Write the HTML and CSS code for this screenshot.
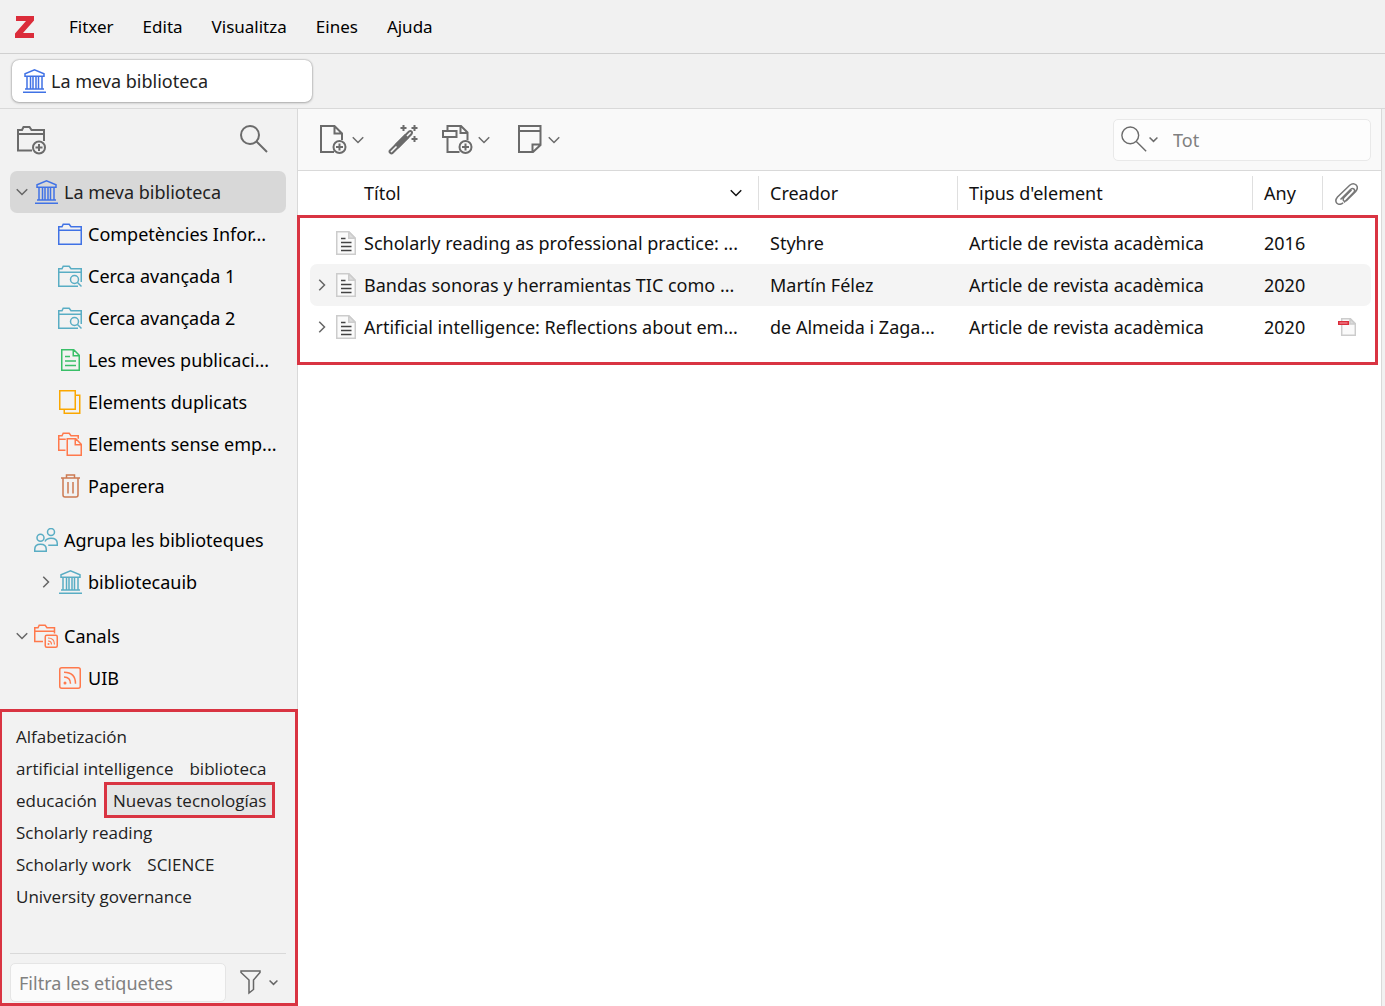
FILE: index.html
```
<!DOCTYPE html>
<html lang="ca">
<head>
    <meta charset="UTF-8">
    <meta name="viewport" content="width=device-width, initial-scale=1.0">
    <title>La meva biblioteca - Zotero</title>
    <link rel="stylesheet" href="styles.css">
</head>
<body>
    <svg class="sprite" aria-hidden="true">
        <symbol id="library" viewBox="0 0 24 24">
            <path d="M3 7.250V4.800L12.500.9l9.500 3.900v2.450zM5 7.500v12.500M8.500 7.500v12.500M11 7.500v12.500M14 7.500v12.500M16.500 7.500v12.500M20 7.500v12.500M3 20h19M1 23.200h23"/>
        </symbol>
        <symbol id="folder" viewBox="0 0 24 24">
            <path d="M.75 22.250V4.750H4l1.200-2.500h6l1.800 2.500h10.250v17.500zM.75 8.250h22.500"/>
        </symbol>
        <symbol id="search-folder" viewBox="0 0 24 24">
            <path d="M20 22.250H.75V4.750H4l1.200-2.500h6l1.800 2.500h10.250V18M.75 8.250h22.500M19.500 18.500l4 4"/>
            <circle cx="16.500" cy="15.500" r="4"/>
        </symbol>
        <symbol id="publications" viewBox="0 0 24 24">
            <path d="M3.750 1.750h12l5.500 5.500v15H3.750zM15.250 1.750v6h6M7 8.500h5M7 13h11M7 17.500h11"/>
        </symbol>
        <symbol id="duplicates" viewBox="0 0 24 24">
            <path d="M1.750.75h15.500v18.500H1.750zM17.250 5.250h4.500v18H6.250v-4"/>
        </symbol>
        <symbol id="unfiled" viewBox="0 0 24 24">
            <path d="M7.500 18.250H.75V3.750H4l1.200-2.500h6l1.800 2.500h7.250v3M.75 7.250h7M9.250 6.750h8.500l5.500 5.500v11h-14zM17.250 6.750v6h6"/>
        </symbol>
        <symbol id="trash" viewBox="0 0 24 24">
            <path d="M3 4h19M8.500 4V1h8v3M5 4v17q0 2 2 2h11q2 0 2-2V4M10 8v11.500M15 8v11.500"/>
        </symbol>
        <symbol id="groups" viewBox="0 0 24 24">
            <circle cx="6.500" cy="9.750" r="3.500"/>
            <circle cx="17" cy="4" r="3.500"/>
            <path d="M.75 23.250v-2q0-5 5.750-5t5.750 5v2zM11 13.500q1.500-3.250 6-3.250 6.250 0 6.250 5v2h-9"/>
        </symbol>
        <symbol id="feeds" viewBox="0 0 24 24">
            <path d="M9 17.500H.75V3.750H4l1.200-2.500h6l1.800 2.500h7.500v5.750M.75 7.250h19.750"/>
            <rect x="11.250" y="11.250" width="12" height="12" rx="1.500"/>
            <path class="thin" d="M14 14q6.500 0 6.500 6.500M14 17q3.500 0 3.500 3.500"/>
            <circle class="dot" cx="14.500" cy="20" r="1"/>
        </symbol>
        <symbol id="feed" viewBox="0 0 24 24">
            <rect x="1.750" y="1.750" width="20.500" height="20.500" rx="2"/>
            <path d="M6 6.250q11.500 0 11.500 11.500M6 11q6.500 0 6.500 6.750"/>
            <circle class="dot" cx="7" cy="17" r="1.500"/>
        </symbol>
        <symbol id="down" viewBox="0 0 12 12">
            <path d="M.75 3.250L6 8.500l5.250-5.250"/>
        </symbol>
        <symbol id="right" viewBox="0 0 12 12">
            <path d="M3.250.75L8.500 6l-5.250 5.250"/>
        </symbol>
        <symbol id="search" viewBox="0 0 30 30">
            <circle cx="11" cy="10" r="9"/>
            <path d="M17.500 16.500l10.500 10.500"/>
        </symbol>
        <symbol id="new-folder" viewBox="0 0 30 30">
            <path d="M16 25.500H2V5h4l1.500-3h6l2 3h12.500v11M2 9h26"/>
            <circle cx="23" cy="22.500" r="6"/>
            <path d="M23 19v7M19.500 22.500h7"/>
        </symbol>
        <symbol id="new-item" viewBox="-1 0 30 30">
            <path d="M15 27H2V1h13.500l7.500 7.500V15M15.500 1v7.500H23"/>
            <circle cx="20.500" cy="22" r="6"/>
            <path d="M20.500 18.500v7M17 22h7"/>
        </symbol>
        <symbol id="wand" viewBox="0 0 30 30">
            <path d="M2 25.500L21 6.500q1.500-1 2.500 0t0 2.500L4.500 28q-1 1-2.300-.2T2 25.500z"/>
            <path class="solid" d="M8 19.500l9-9 2.500 2.500-9 9z"/>
            <path d="M15.500 0v6M12.500 3h6M26.500 0v6M23.500 3h6M26.500 11v6M23.500 14h6"/>
        </symbol>
        <symbol id="new-attachment" viewBox="1 0 32 30">
            <path d="M18.500 27H6.500V13M6.500 6V1H20l6.500 6.500V15M19.500 1v7h7M2 6h13.500v6H2z"/>
            <circle cx="24.500" cy="22" r="6"/>
            <path d="M24.500 18.500v7M21 22h7"/>
        </symbol>
        <symbol id="note" viewBox="-3 0 30 30">
            <path d="M2 1h21.500v19L16 27H2zM2 6h21.500M15.500 27v-7.500h8"/>
        </symbol>
        <symbol id="clip" viewBox="-1 -1 24 24">
            <path d="M16.500 8L9 15.500q-1.500 2-.3 3.200t3-.2l9-9q3-3.600.5-6.500-3-2.700-6.500.3L2.500 15q-3 3.500-.6 6.200 2.800 2.400 6.200-.4M5.500 17.500l10-10q2-1.800 3.500-.4t-.4 3.500l-9.600 9.800"/>
        </symbol>
        <symbol id="filter" viewBox="0 0 24 26">
            <path d="M1 1h19v1.500L13.500 10v9.500L9 23V10L1 2.500z"/>
        </symbol>
        <symbol id="article" viewBox="0 0 20 24">
            <path class="page" d="M.75.75h12l6.500 6.500v16H.75z"/>
            <path class="fold" d="M12.750.75v6.500h6.500z"/>
            <path class="lines" d="M5 7.500h4.500M5 11.500h10.500M5 15.500h10.500M5 19.500h10.500"/>
        </symbol>
        <symbol id="pdf" viewBox="0 0 18 18">
            <path class="page" d="M3.700.7h8.600l5 5v11.600H3.700z"/>
            <path class="fold" d="M12 .7v5.300h5.300z"/>
            <path class="badge" d="M.7 3.700h9.600v2.600H.7z"/>
        </symbol>
    </svg>

    <header class="menubar">
        <svg class="logo" viewBox="0 0 20 22" role="img" aria-label="Zotero"><path d="M1 0h18v4.500L8 17h11v5H0v-4.500L11 5H1z"/></svg>
        <nav class="menu">
            <button>Fitxer</button>
            <button>Edita</button>
            <button>Visualitza</button>
            <button>Eines</button>
            <button>Ajuda</button>
        </nav>
    </header>

    <div class="tabbar">
        <button class="tab"><svg class="icon blue"><use href="#library"/></svg>La meva biblioteca</button>
    </div>

    <div class="workspace">
        <aside class="sidebar">
            <div class="sidebar-tools">
                <button aria-label="Nova col·lecció"><svg class="tool-icon"><use href="#new-folder"/></svg></button>
                <button aria-label="Cerca"><svg class="tool-icon"><use href="#search"/></svg></button>
            </div>

            <ul class="tree">
                <li><button class="row selected"><svg class="twisty"><use href="#down"/></svg><svg class="icon blue"><use href="#library"/></svg>La meva biblioteca</button></li>
                <li><button class="row child"><svg class="icon blue"><use href="#folder"/></svg>Competències Infor...</button></li>
                <li><button class="row child"><svg class="icon teal"><use href="#search-folder"/></svg>Cerca avançada 1</button></li>
                <li><button class="row child"><svg class="icon teal"><use href="#search-folder"/></svg>Cerca avançada 2</button></li>
                <li><button class="row child"><svg class="icon green"><use href="#publications"/></svg>Les meves publicaci...</button></li>
                <li><button class="row child"><svg class="icon yellow"><use href="#duplicates"/></svg>Elements duplicats</button></li>
                <li><button class="row child"><svg class="icon orange"><use href="#unfiled"/></svg>Elements sense emp...</button></li>
                <li><button class="row child"><svg class="icon brown"><use href="#trash"/></svg>Paperera</button></li>
                <li class="group"><button class="row header"><svg class="icon teal"><use href="#groups"/></svg>Agrupa les biblioteques</button></li>
                <li><button class="row nested"><svg class="twisty"><use href="#right"/></svg><svg class="icon teal"><use href="#library"/></svg>bibliotecauib</button></li>
                <li class="group"><button class="row"><svg class="twisty"><use href="#down"/></svg><svg class="icon orange"><use href="#feeds"/></svg>Canals</button></li>
                <li><button class="row child"><svg class="icon orange"><use href="#feed"/></svg>UIB</button></li>
            </ul>

            <section class="tag-pane">
                <div class="tags">
                    <button>Alfabetización</button>
                    <button>artificial intelligence</button>
                    <button>biblioteca</button>
                    <button>educación</button>
                    <button class="marked">Nuevas tecnologías</button>
                    <button>Scholarly reading</button>
                    <button>Scholarly work</button>
                    <button>SCIENCE</button>
                    <button>University governance</button>
                </div>
                <div class="tag-filter">
                    <input type="text" placeholder="Filtra les etiquetes" aria-label="Filtra les etiquetes">
                    <button aria-label="Opcions del filtre"><svg class="funnel"><use href="#filter"/></svg><svg class="arrow small"><use href="#down"/></svg></button>
                </div>
            </section>
        </aside>

        <main class="content">
            <div class="toolbar">
                <button aria-label="Nou element"><svg class="tool-icon"><use href="#new-item"/></svg><svg class="arrow"><use href="#down"/></svg></button>
                <button aria-label="Afegeix per identificador"><svg class="tool-icon"><use href="#wand"/></svg></button>
                <button aria-label="Afegeix un adjunt"><svg class="wide-icon"><use href="#new-attachment"/></svg><svg class="arrow"><use href="#down"/></svg></button>
                <button aria-label="Nova nota"><svg class="tool-icon"><use href="#note"/></svg><svg class="arrow"><use href="#down"/></svg></button>
                <label class="search">
                    <svg class="search-icon"><use href="#search"/></svg>
                    <svg class="arrow small"><use href="#down"/></svg>
                    <input type="text" placeholder="Tot" aria-label="Cerca">
                </label>
            </div>

            <div class="items">
                <table>
                    <colgroup>
                        <col>
                        <col class="col-creator">
                        <col class="col-type">
                        <col class="col-year">
                        <col class="col-clip">
                    </colgroup>
                    <thead>
                        <tr>
                            <th><div class="title-head">Títol<svg class="arrow"><use href="#down"/></svg></div></th>
                            <th><div>Creador</div></th>
                            <th><div>Tipus d'element</div></th>
                            <th><div>Any</div></th>
                            <th><div><svg class="clip" role="img" aria-label="Adjunt"><use href="#clip"/></svg></div></th>
                        </tr>
                    </thead>
                    <tbody>
                        <tr>
                            <td><div class="title"><span class="twisty"></span><svg class="doc"><use href="#article"/></svg>Scholarly reading as professional practice: ...</div></td>
                            <td>Styhre</td>
                            <td>Article de revista acadèmica</td>
                            <td>2016</td>
                            <td></td>
                        </tr>
                        <tr>
                            <td><div class="title"><svg class="twisty"><use href="#right"/></svg><svg class="doc"><use href="#article"/></svg>Bandas sonoras y herramientas TIC como ...</div></td>
                            <td>Martín Félez</td>
                            <td>Article de revista acadèmica</td>
                            <td>2020</td>
                            <td></td>
                        </tr>
                        <tr>
                            <td><div class="title"><svg class="twisty"><use href="#right"/></svg><svg class="doc"><use href="#article"/></svg>Artificial intelligence: Reflections about em...</div></td>
                            <td>de Almeida i Zaga...</td>
                            <td>Article de revista acadèmica</td>
                            <td>2020</td>
                            <td><svg class="pdf" role="img" aria-label="PDF"><use href="#pdf"/></svg></td>
                        </tr>
                    </tbody>
                </table>
                <div class="highlight"></div>
            </div>
        </main>
    </div>
</body>
</html>
```
FILE: styles.css
```
*{
    box-sizing: border-box;
}
body{
    margin: 0;
    min-height: 100vh;
    display: flex;
    flex-direction: column;
    background: #f1f1f1;
    color: #111;
    font-family: "Noto Sans", "Open Sans", sans-serif;
    font-size: 18px;
}
button,
input{
    font: inherit;
    color: inherit;
    border: 0;
    padding: 0;
    background: none;
}
button{
    display: flex;
    align-items: center;
    white-space: nowrap;
}
svg{
    display: block;
    flex: none;
    fill: none;
    stroke: currentColor;
    stroke-width: 1.5;
}
.sprite{
    position: absolute;
    width: 0;
    height: 0;
}

/* menu and tabs */
.menubar{
    display: flex;
    align-items: center;
    height: 54px;
    padding: 0 15px;
    border-bottom: 1px solid #d0d0d0;
}
.logo{
    width: 20px;
    height: 22px;
    fill: #db2c3a;
    stroke: none;
}
.menu{
    display: flex;
    gap: 29px;
    margin-left: 34px;
    font-size: 17px;
    color: #000;
}
.tabbar{
    height: 55px;
    padding: 6px 12px;
    border-bottom: 1px solid #d9d9d9;
}
.tab{
    width: 300px;
    height: 42px;
    padding: 0 10px;
    gap: 5px;
    border-radius: 7px;
    background: #fff;
    box-shadow: 0 0 2px rgba(0,0,0,.4), 0 1px 3px rgba(0,0,0,.2);
    color: #222;
}

.workspace{
    flex: 1;
    display: flex;
}

/* sidebar */
.sidebar{
    display: flex;
    flex-direction: column;
    width: 298px;
    flex: none;
    border-right: 1px solid #d9d9d9;
    background: #f2f2f2;
}
.sidebar-tools{
    display: flex;
    align-items: center;
    justify-content: space-between;
    height: 62px;
    padding: 0 28px 0 16px;
    color: #6b6b6b;
}
.tool-icon{
    width: 30px;
    height: 30px;
    stroke-width: 2;
}
.icon{
    width: 24px;
    height: 24px;
}
.blue{ color: #4072e5; }
.teal{ color: #59adc4; }
.green{ color: #39bf68; }
.yellow{ color: #faa700; }
.orange{ color: #ff794c; }
.brown{ color: #cc7a52; }
.dot{
    fill: currentColor;
    stroke: none;
}
.thin{
    stroke-width: 1.2;
}
.tree{
    flex: 1;
    list-style: none;
    margin: 0;
    padding: 0 11px 10px 10px;
}
.group{
    margin-top: 12px;
}
.row{
    width: 100%;
    height: 42px;
    gap: 6px;
    padding-left: 6px;
    border-radius: 7px;
    color: #000;
}
.selected{
    background: #d8d8d8;
    color: #222;
}
.header{
    padding-left: 24px;
}
.nested{
    padding-left: 30px;
}
.child{
    padding-left: 48px;
}
.twisty{
    width: 12px;
    height: 12px;
    flex: none;
    color: #666;
}

/* tags */
.tag-pane{
    margin-right: -1px;
    border: 3px solid #d93442;
    border-left-width: 2px;
    color: #222;
}
.tags{
    display: flex;
    flex-wrap: wrap;
    align-content: flex-start;
    min-height: 241px;
    padding: 8px 8px 0 6px;
    font-family: "Open Sans", "Noto Sans", sans-serif;
    font-size: 17px;
}
.tags button{
    height: 32px;
    padding: 0 8px;
}
.tags .marked{
    position: relative;
    background: #e5e5e5;
}
.marked::after{
    content: "";
    position: absolute;
    inset: -2px -1px;
    border: 3px solid #d93442;
}
.tag-filter{
    display: flex;
    align-items: center;
    margin: 0 9px 0 8px;
    padding: 9px 0 1px;
    border-top: 1px solid #d9d9d9;
}
.tag-filter input{
    width: 216px;
    height: 39px;
    padding: 0 8px;
    border: 1px solid #e5e5e5;
    border-radius: 5px;
    background: #fbfbfb;
}
.tag-filter button{
    gap: 5px;
    margin-left: 14px;
    color: #666;
}
input::placeholder{
    color: #808080;
    opacity: 1;
}
.funnel{
    width: 24px;
    height: 26px;
}

/* items pane */
.content{
    flex: 1;
    min-width: 0;
    margin-right: 3px;
    border-right: 1px solid #d9d9d9;
    background: #fff;
}
.toolbar{
    display: flex;
    align-items: center;
    height: 62px;
    padding: 0 10px 0 20px;
    border-bottom: 1px solid #d9d9d9;
    background: #f9f9f9;
    color: #6b6b6b;
}
.toolbar button{
    gap: 4px;
    margin-right: 24px;
}
.wide-icon{
    width: 32px;
    height: 30px;
    stroke-width: 2;
}
.solid{
    fill: currentColor;
}
.arrow{
    width: 12px;
    height: 12px;
}
.small{
    width: 9px;
    height: 9px;
    stroke-width: 2;
}
.search{
    display: flex;
    align-items: center;
    width: 258px;
    height: 42px;
    margin-left: auto;
    padding-left: 6px;
    border: 1px solid #e9e9e9;
    border-radius: 5px;
    background: #fdfdfd;
}
.search-icon{
    width: 28px;
    height: 28px;
    margin-right: 1px;
}
.search input{
    flex: 1;
    min-width: 0;
    margin-left: 15px;
}
.items{
    position: relative;
    padding: 0 10px 0 12px;
}
table{
    width: 100%;
    table-layout: fixed;
    border-spacing: 0;
}
.col-creator{ width: 199px; }
.col-type{ width: 295px; }
.col-year{ width: 70px; }
.col-clip{ width: 49px; }
th{
    height: 51px;
    padding: 5px 0 12px;
    font-weight: normal;
    text-align: left;
}
th div{
    display: flex;
    align-items: center;
    height: 34px;
    padding-left: 11px;
    border-left: 1px solid #dfdfdf;
}
th .title-head{
    justify-content: space-between;
    padding: 0 16px 0 54px;
    border: 0;
}
.clip{
    width: 24px;
    height: 24px;
    color: #777;
}
td{
    height: 42px;
    padding: 0 0 0 12px;
    white-space: nowrap;
}
td:first-child{
    padding-left: 6px;
    border-radius: 7px 0 0 7px;
}
td:last-child{
    padding-left: 16px;
    border-radius: 0 7px 7px 0;
}
tbody tr:nth-child(even) td{
    background: #f4f4f4;
}
.title{
    display: flex;
    align-items: center;
}
.doc{
    width: 20px;
    height: 24px;
    margin: 0 8px;
}
.page{
    fill: #fafafa;
    stroke: #ccc;
}
.fold{
    fill: #ddd;
    stroke: #ccc;
}
.lines{
    stroke: #444;
}
.badge{
    fill: #f7a1a8;
    stroke: #db2c3a;
}
.pdf{
    width: 18px;
    height: 18px;
}
.highlight{
    position: absolute;
    top: 44px;
    left: -1px;
    right: 3px;
    height: 150px;
    border: 3px solid #d93442;
    pointer-events: none;
}
```
